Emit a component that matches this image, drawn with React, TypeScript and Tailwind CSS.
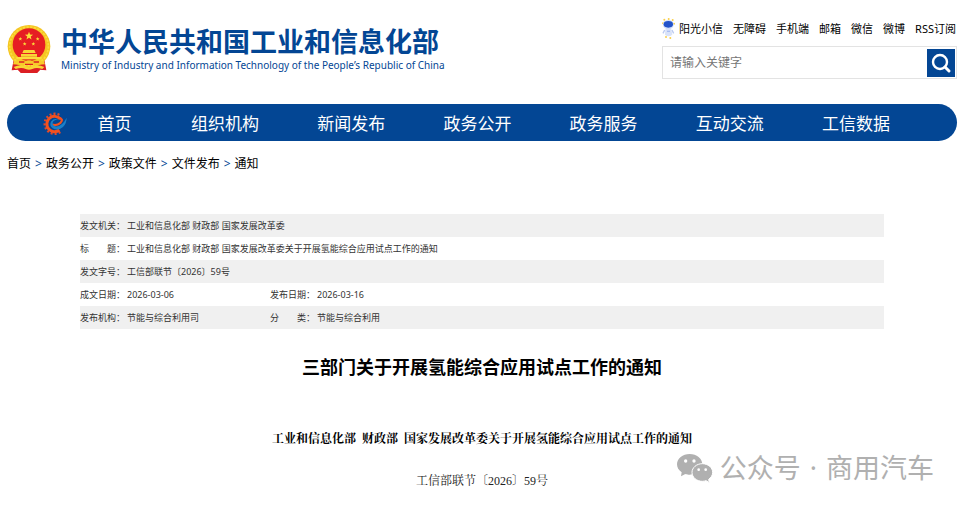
import type { ReactNode } from "react";

const topLinks = ["无障碍", "手机端", "邮箱", "微信", "微博", "RSS订阅"];

const navItems = ["组织机构", "新闻发布", "政务公开", "政务服务", "互动交流", "工信数据"];

const crumbs = ["首页", "政务公开", "政策文件", "文件发布", "通知"];

function Star({ x, y, r }: { x: number; y: number; r: number }) {
  const points = Array.from({ length: 10 }, (_, i) => {
    const radius = i % 2 === 0 ? r : r * 0.42;
    const angle = (Math.PI / 5) * i - Math.PI / 2;
    return `${x + radius * Math.cos(angle)},${y + radius * Math.sin(angle)}`;
  }).join(" ");
  return <polygon points={points} fill="#fbe03a" />;
}

function Emblem() {
  return (
    <svg viewBox="0 0 132 144" className="h-12 w-11 shrink-0" aria-hidden="true">
      <path d="M20 104 L14 136 L34 134 L42 144 L90 144 L98 134 L118 136 L112 104Z" fill="#dc1f24" />
      <circle cx="66" cy="64" r="64" fill="#f5c522" />
      <circle cx="66" cy="64" r="58" fill="none" stroke="#fbdc3c" strokeWidth="5" strokeDasharray="7 4" />
      <circle cx="66" cy="59" r="49" fill="#e61d23" />
      <Star x={66} y={33} r={13} />
      <Star x={40} y={42} r={6} />
      <Star x={92} y={42} r={6} />
      <Star x={53} y={57} r={6} />
      <Star x={79} y={57} r={6} />
      <path d="M50 75h32l4 9H46z M42 87h48v8H42z" fill="#f9d535" />
      <path d="M28 96h76v7H28z" fill="#fbdc3c" />
      <path d="M22 108 Q42 102 54 110 Q66 102 78 110 Q90 102 110 108 L114 118 L88 120 Q66 116 44 120 L18 118Z" fill="#f7cb2a" />
      <path d="M36 111h16M80 111h16M54 118h24" stroke="#dc1f24" strokeWidth="4" />
      <path d="M20 126 Q40 116 56 124 Q66 130 76 124 Q92 116 112 126 L106 132 Q88 126 76 132 Q66 137 56 132 Q44 126 26 132Z" fill="#f9d535" />
      <path d="M32 134 Q46 128 58 136 L66 139 L74 136 Q86 128 100 134 L90 144 H42Z" fill="#dc1f24" />
    </svg>
  );
}

function Mascot() {
  return (
    <svg viewBox="0 0 39 63" className="h-[21px] w-[13px] shrink-0" aria-hidden="true">
      <g fill="#f9cf4a">
        <circle cx="20" cy="3" r="3" />
        <circle cx="7" cy="5" r="3" />
        <circle cx="32" cy="6" r="3" />
        <circle cx="3" cy="16" r="3" />
        <circle cx="36" cy="17" r="3" />
        <circle cx="12" cy="57" r="3" />
        <circle cx="25" cy="60" r="3" />
      </g>
      <ellipse cx="19" cy="20" rx="16" ry="14" fill="#cfdcf8" />
      <ellipse cx="19" cy="19" rx="14" ry="10" fill="#2353c9" />
      <path d="M10 34 Q19 30 28 34 L31 50 Q19 60 9 50Z" fill="#d8e2f9" />
      <path d="M8 36 L3 46M30 36 L35 46" stroke="#b9c9f1" strokeWidth="4" />
      <path d="M15 40h9" stroke="#a9bdf0" strokeWidth="4" />
    </svg>
  );
}

function GearLogo() {
  return (
    <svg viewBox="0 0 72 72" className="h-6 w-6 shrink-0" fill="none" aria-hidden="true">
      <path d="M52 60 A30 30 0 1 1 54 12" stroke="#e04a2b" strokeWidth="7" strokeDasharray="6 6" />
      <path d="M49 54 A23 23 0 1 1 52 21" stroke="#f4511e" strokeWidth="9" />
      <path d="M46 16 Q64 22 52 33 Q42 42 27 38" stroke="#f4511e" strokeWidth="7" />
      <path d="M47 25 Q38 20 31 28 Q25 38 36 43 Q56 46 71 17 Q71 34 60 45 Q44 58 29 49 Q17 40 25 28 Q35 16 47 25Z" fill="#1a7fc8" />
    </svg>
  );
}

function SearchIcon() {
  return (
    <svg viewBox="0 0 28 28" className="h-7 w-7" fill="none" stroke="white" aria-hidden="true">
      <circle cx="13" cy="13" r="7" strokeWidth="2.4" />
      <path d="M18 18 L22 22" strokeWidth="3" strokeLinecap="round" />
    </svg>
  );
}

function WechatIcon() {
  return (
    <svg viewBox="0 0 108 87" className="h-[29px] w-9 shrink-0" aria-hidden="true">
      <path d="M38 0 C17 0 0 14 0 31 C0 41 5 49 14 55 L12 67 L25 60 C29 62 34 62 38 62 C59 62 76 48 76 31 C76 14 59 0 38 0Z" fill="#b0b0b0" />
      <path
        d="M76 29 C59 29 45 41 45 55 C45 70 59 82 76 82 C80 82 84 81 87 80 L97 86 L95 76 C102 71 107 64 107 55 C107 41 93 29 76 29Z"
        fill="#b0b0b0"
        stroke="white"
        strokeWidth="3"
      />
      <g fill="white">
        <circle cx="26" cy="21" r="5" />
        <circle cx="51" cy="21" r="5" />
        <circle cx="65" cy="47" r="4" />
        <circle cx="86" cy="47" r="4" />
      </g>
    </svg>
  );
}

function Spread({ first, last }: { first: string; last: string }) {
  return (
    <span className="flex w-9 justify-between">
      <span>{first}</span>
      <span>{last}</span>
    </span>
  );
}

function Label({ children }: { children: ReactNode }) {
  return (
    <th scope="row" className="p-0 text-left font-normal whitespace-nowrap">
      <span className="flex">
        {children}：
      </span>
    </th>
  );
}

export default function App() {
  return (
    <div className="relative min-h-screen bg-white font-['Noto_Sans','Noto_Sans_CJK_SC',sans-serif] text-black" lang="zh-CN">
      <header className="flex items-start justify-between px-[7px] pt-[18px]">
        <a href="#" className="flex items-start gap-[10px] pt-[7px] text-[#034694]">
          <Emblem />
          <span className="block">
            <span className="block font-['Noto_Sans_CJK_SC',sans-serif] text-[27px] leading-8 font-bold whitespace-nowrap">
              中华人民共和国工业和信息化部
            </span>
            <span className="block text-[10px] leading-4 whitespace-nowrap">
              Ministry of Industry and Information Technology of the People’s Republic of China
            </span>
          </span>
        </a>
        <div className="w-[295px]">
          <div className="flex items-center justify-end gap-[10px] pr-px text-[11px] leading-[21px] whitespace-nowrap">
            <a href="#" className="flex items-center gap-1">
              <Mascot />
              阳光小信
            </a>
            {topLinks.map((link) => (
              <a key={link} href="#">{link}</a>
            ))}
          </div>
          <form className="mt-[7px] flex h-[33px] items-center border border-[#e3e3e3] pr-px">
            <input
              type="text"
              aria-label="请输入关键字"
              placeholder="请输入关键字"
              className="h-full min-w-0 flex-1 px-[7px] text-[12px] outline-none placeholder:text-[#757575]"
            />
            <button type="submit" aria-label="搜索" className="bg-[#034694]">
              <SearchIcon />
            </button>
          </form>
        </div>
      </header>

      <nav className="mx-[7px] mt-[25px] flex h-[37px] items-center rounded-full bg-[#034694] pt-[2px] pr-[38px] pl-9 text-[17px] text-white">
        <GearLogo />
        <a href="#" className="w-[95px] text-center">首页</a>
        {navItems.map((item) => (
          <a key={item} href="#" className="flex-1 text-center">{item}</a>
        ))}
      </nav>

      <div className="flex gap-1 px-[7px] pt-[14px] text-[12px] leading-[18px]">
        {crumbs.map((crumb, i) => (
          <span key={crumb} className="flex gap-1">
            {i > 0 && <span className="text-[#034694]">&gt;</span>}
            <a href="#">{crumb}</a>
          </span>
        ))}
      </div>

      <main className="px-20 pt-[41px]">
        <table className="w-full table-fixed border-collapse text-[9px] leading-[23px] text-[#333]">
          <colgroup>
            <col className="w-[47px]" />
            <col className="w-[143px]" />
            <col className="w-[47px]" />
            <col />
          </colgroup>
          <tbody>
            <tr className="bg-[#f0f0f0]">
              <Label>发文机关</Label>
              <td className="p-0" colSpan={3}>工业和信息化部 财政部 国家发展改革委</td>
            </tr>
            <tr>
              <Label><Spread first="标" last="题" /></Label>
              <td className="p-0" colSpan={3}>工业和信息化部 财政部 国家发展改革委关于开展氢能综合应用试点工作的通知</td>
            </tr>
            <tr className="bg-[#f0f0f0]">
              <Label>发文字号</Label>
              <td className="p-0" colSpan={3}>工信部联节〔2026〕59号</td>
            </tr>
            <tr>
              <Label>成文日期</Label>
              <td className="p-0">2026-03-06</td>
              <Label>发布日期</Label>
              <td className="p-0">2026-03-16</td>
            </tr>
            <tr className="bg-[#f0f0f0]">
              <Label>发布机构</Label>
              <td className="p-0">节能与综合利用司</td>
              <Label><Spread first="分" last="类" /></Label>
              <td className="p-0">节能与综合利用</td>
            </tr>
          </tbody>
        </table>

        <h1 className="mt-6 text-center text-[18px] leading-7 font-bold">
          三部门关于开展氢能综合应用试点工作的通知
        </h1>

        <div className="mt-[49px] text-center font-['Liberation_Serif','Noto_Serif_CJK_SC','Noto_Sans_CJK_SC',serif] text-[12px] leading-[18px]">
          <p className="font-bold">
            工业和信息化部&nbsp;&nbsp;财政部&nbsp;&nbsp;国家发展改革委关于开展氢能综合应用试点工作的通知
          </p>
          <p className="mt-6 text-[#222]">工信部联节〔2026〕59号</p>
        </div>
      </main>

      <div className="absolute top-[450px] right-[30px] flex items-center gap-[7px] text-[27px] leading-9 whitespace-nowrap text-[#b0b0b0]">
        <WechatIcon />
        <span className="flex gap-[9px]">
          <span>公众号</span>
          <span>·</span>
          <span>商用汽车</span>
        </span>
      </div>
    </div>
  );
}
